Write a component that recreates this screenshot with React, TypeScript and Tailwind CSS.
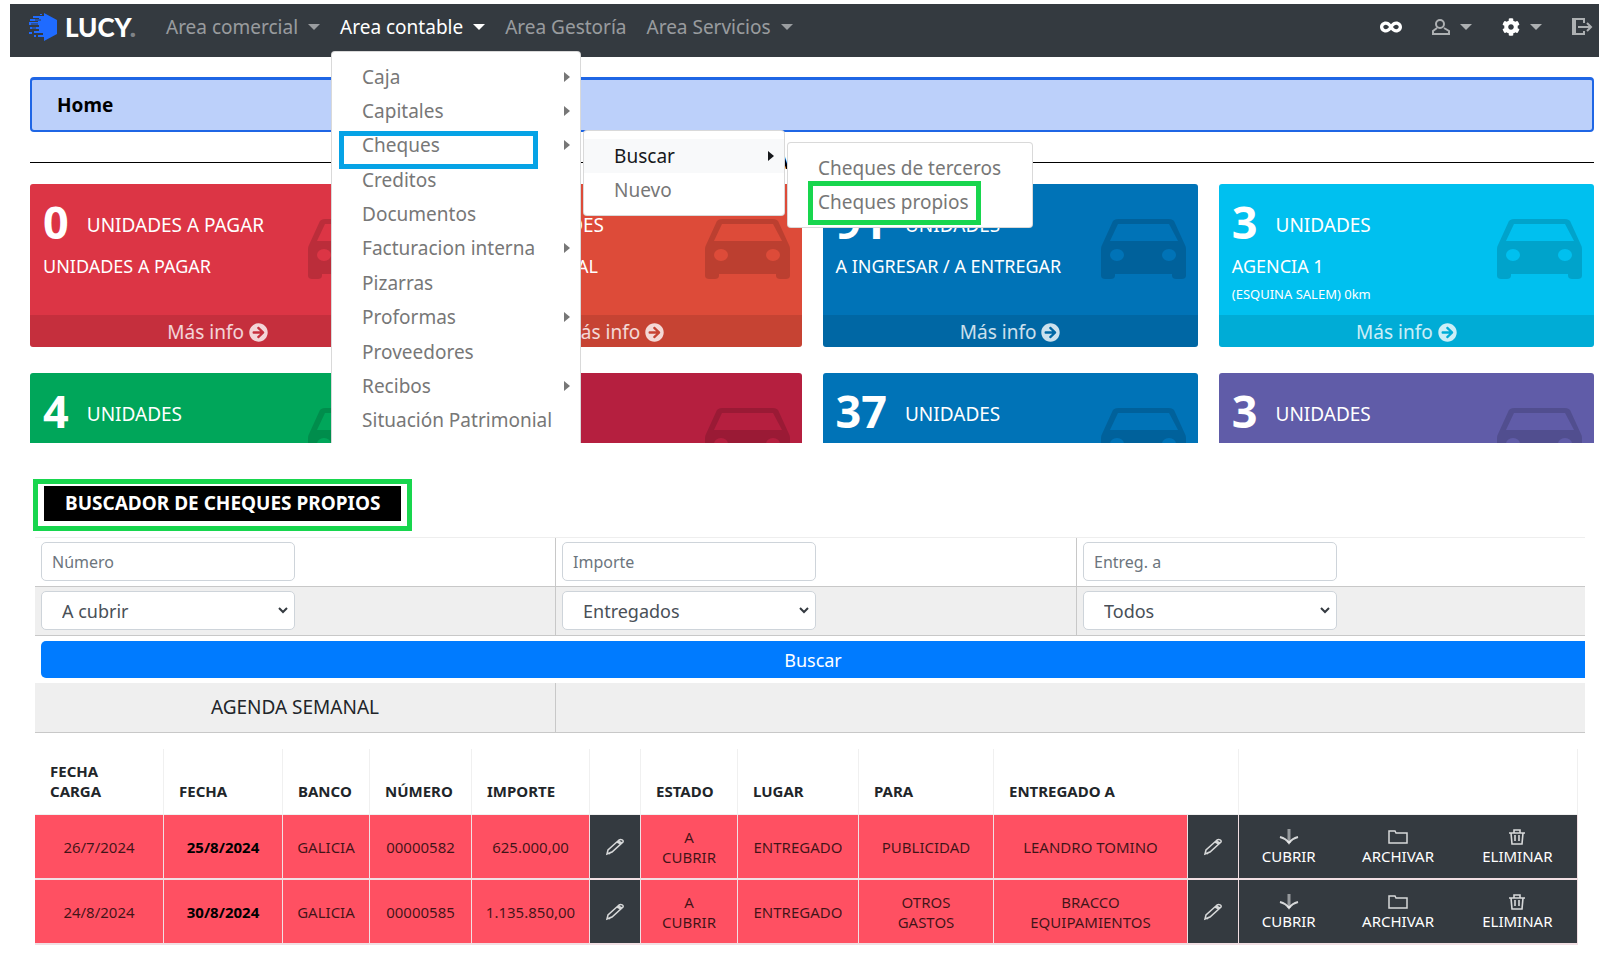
import type { ReactNode } from 'react';
import clsx from 'clsx';
import { FaArrowCircleRight, FaCog, FaInfinity } from 'react-icons/fa';

interface MenuEntry {
  label: string;
  hasChildren?: boolean;
}

const accountingMenu: MenuEntry[] = [
  { label: 'Caja', hasChildren: true },
  { label: 'Capitales', hasChildren: true },
  { label: 'Cheques', hasChildren: true },
  { label: 'Creditos' },
  { label: 'Documentos' },
  { label: 'Facturacion interna', hasChildren: true },
  { label: 'Pizarras' },
  { label: 'Proformas', hasChildren: true },
  { label: 'Proveedores' },
  { label: 'Recibos', hasChildren: true },
  { label: 'Situación Patrimonial' },
];

interface StatCardProps {
  value: string;
  unit: string;
  title?: string;
  note?: string;
  color: string;
}

const cards: StatCardProps[] = [
  { value: '0', unit: 'UNIDADES A PAGAR', title: 'UNIDADES A PAGAR', color: 'bg-[#dc3545]' },
  { value: '40', unit: 'UNIDADES', title: 'AGENCIA CENTRAL', color: 'bg-[#dd4b39]' },
  { value: '91', unit: 'UNIDADES', title: 'A INGRESAR / A ENTREGAR', color: 'bg-[#0073b7]' },
  { value: '3', unit: 'UNIDADES', title: 'AGENCIA 1', note: '(ESQUINA SALEM) 0km', color: 'bg-[#00c0ef]' },
  { value: '4', unit: 'UNIDADES', color: 'bg-[#00a65a]' },
  { value: '2', unit: 'UNIDADES', color: 'bg-[#b51f3f]' },
  { value: '37', unit: 'UNIDADES', color: 'bg-[#0073b7]' },
  { value: '3', unit: 'UNIDADES', color: 'bg-[#605ca8]' },
];

const checks = [
  {
    loaded: '26/7/2024',
    date: '25/8/2024',
    bank: 'GALICIA',
    number: '00000582',
    amount: '625.000,00',
    status: 'A CUBRIR',
    place: 'ENTREGADO',
    purpose: 'PUBLICIDAD',
    recipient: 'LEANDRO TOMINO',
  },
  {
    loaded: '24/8/2024',
    date: '30/8/2024',
    bank: 'GALICIA',
    number: '00000585',
    amount: '1.135.850,00',
    status: 'A CUBRIR',
    place: 'ENTREGADO',
    purpose: 'OTROS GASTOS',
    recipient: 'BRACCO EQUIPAMIENTOS',
  },
];

function CaretDown() {
  return (
    <svg width="12" height="6" viewBox="0 0 12 6" fill="currentColor" aria-hidden="true">
      <path d="M0 0h12L6 6z" />
    </svg>
  );
}

function CaretRight() {
  return (
    <svg width="6" height="10" viewBox="0 0 6 10" fill="currentColor" aria-hidden="true">
      <path d="M0 0l6 5-6 5z" />
    </svg>
  );
}

function LogoMark() {
  return (
    <svg width="28" height="28" viewBox="0 0 28 28" fill="#1f6bff" aria-hidden="true">
      <path d="M15 0l13 7v14l-13 7v-4H9v-2h5v-2H5v-2h5v-2H1v-2h9v-2H0V9h9V8H1V6h9V5H4V3h11z" />
      <path d="M0 19h3v2H0zM5 22h2v2H5zM11 1h2v1h-2z" />
      <path d="M2 11h7M3 15h4M6 7h6" stroke="#343a40" strokeWidth="1" />
    </svg>
  );
}

function UserIcon() {
  return (
    <svg width="18" height="16" viewBox="0 0 18 16" fill="none" stroke="currentColor" strokeWidth="2" aria-hidden="true">
      <ellipse cx="8" cy="5" rx="4" ry="4" />
      <path d="M5 9L1 12v3h16v-3l-5-3" />
    </svg>
  );
}

function ExitIcon() {
  return (
    <svg width="21" height="18" viewBox="0 0 21 18" fill="none" stroke="currentColor" strokeWidth="2" aria-hidden="true">
      <path d="M12 5V1H1v15h11v-3M3 1v15" />
      <path d="M6 9h13M15 5l4 4-4 4" />
    </svg>
  );
}

function CarIcon() {
  return (
    <svg width="85" height="60" viewBox="0 0 85 60" fill="currentColor" fillRule="evenodd" aria-hidden="true">
      <path d="M17 0h51c3 0 5 1 6 4l10 22c1 2 1 3 1 5v26c0 2-2 3-4 3h-6c-2 0-4-1-4-3v-2H14v2c0 2-2 3-4 3H4c-2 0-4-1-4-3V31c0-2 0-3 1-5L11 4c1-3 3-4 6-4zM17 5L9 22h68L68 5zM16 30a7 6 0 1 0 0 12a7 6 0 1 0 0-12zM68 30a7 6 0 1 0 0 12a7 6 0 1 0 0-12z" />
    </svg>
  );
}

function PencilIcon() {
  return (
    <svg width="20" height="18" viewBox="0 0 20 18" fill="none" stroke="currentColor" strokeWidth="1.5" aria-hidden="true">
      <path d="M2 16l1-4L14 2c2-1 5 0 4 2L7 14zM13 3l4 2M12 4l4 2M4 16l2-2" />
    </svg>
  );
}

function ArrowDownIcon() {
  return (
    <svg width="20" height="16" viewBox="0 0 20 16" fill="none" stroke="currentColor" aria-hidden="true">
      <path d="M10 0v14" strokeWidth="3" opacity="0.6" />
      <path d="M1 8c4 1 7 3 9 6 2-3 5-5 9-6" strokeWidth="2" />
    </svg>
  );
}

function FolderIcon() {
  return (
    <svg width="20" height="16" viewBox="0 0 20 16" fill="none" stroke="currentColor" strokeWidth="1.5" aria-hidden="true">
      <path d="M1 14V2h6l1 2h11v10z" />
    </svg>
  );
}

function TrashIcon() {
  return (
    <svg width="18" height="16" viewBox="0 0 18 16" fill="none" stroke="currentColor" strokeWidth="1.6" aria-hidden="true">
      <path d="M1 4h16M6 4V1h6v3M3 4l1 11h10l1-11M7 6v6M11 6v6" />
    </svg>
  );
}

function NavItem({ label, active, caret = true, children }: { label: string; active?: boolean; caret?: boolean; children?: ReactNode }) {
  return (
    <li className="relative">
      <a href="#" className={clsx('flex items-center gap-[10px] px-2', active ? 'text-white' : 'text-white/50')}>
        {label}
        {caret && <CaretDown />}
      </a>
      {children}
    </li>
  );
}

function MenuLink({ label, hasChildren, active }: MenuEntry & { active?: boolean }) {
  return (
    <a
      href="#"
      className={clsx('flex h-full min-h-[34px] items-center justify-between pl-[30px] pr-[10px]', active ? 'bg-[#f8f9fa] text-[#16181b]' : 'text-[#777]')}
    >
      {label}
      {hasChildren && <CaretRight />}
    </a>
  );
}

function AccountingMenu() {
  return (
    <div className="absolute -left-px top-[37px] z-20">
      <ul className="flex h-[396px] w-[250px] flex-col rounded border border-black/15 bg-white py-2">
        {accountingMenu.map((entry) => (
          <li key={entry.label} className="flex-1">
            <MenuLink {...entry} />
          </li>
        ))}
      </ul>
      <span className="absolute left-2 top-20 h-[38px] w-[199px] border-[5px] border-[#06a3e6]" />
      <ul className="absolute left-[252px] top-[79px] w-[202px] rounded border border-black/15 bg-white py-2">
        <li>
          <MenuLink label="Buscar" hasChildren active />
        </li>
        <li>
          <MenuLink label="Nuevo" />
        </li>
      </ul>
      <ul className="absolute left-[456px] top-[91px] w-[246px] rounded border border-black/15 bg-white py-2">
        <li>
          <MenuLink label="Cheques de terceros" />
        </li>
        <li className="relative">
          <MenuLink label="Cheques propios" />
          <span className="absolute -top-1 left-5 h-11 w-[173px] border-[5px] border-[#18d64e]" />
        </li>
      </ul>
    </div>
  );
}

function Navbar() {
  return (
    <nav className="ml-[10px] flex h-[53px] items-center bg-[#343a40] pb-2 pl-[19px] pr-[6px] text-[19px] leading-[26px]">
      <a href="#" className="flex w-[129px] items-center gap-2 font-[Lato] text-[26px] font-black text-white">
        <LogoMark />
        <span>
          LUCY<span className="text-white/40">.</span>
        </span>
      </a>
      <ul className="flex gap-1">
        <NavItem label="Area comercial" />
        <NavItem label="Area contable" active>
          <AccountingMenu />
        </NavItem>
        <NavItem label="Area Gestoría" caret={false} />
        <NavItem label="Area Servicios" />
      </ul>
      <div className="ml-auto flex items-center gap-[30px] text-white/60">
        <button type="button" aria-label="Vincular" className="text-white">
          <FaInfinity size={22} />
        </button>
        <button type="button" aria-label="Usuario" className="flex items-center gap-[10px]">
          <UserIcon />
          <CaretDown />
        </button>
        <button type="button" aria-label="Configuración" className="flex items-center gap-[10px]">
          <FaCog size={18} className="text-white" />
          <CaretDown />
        </button>
        <button type="button" aria-label="Salir">
          <ExitIcon />
        </button>
      </div>
    </nav>
  );
}

function StatCard({ value, unit, title, note, color }: StatCardProps) {
  return (
    <article className={clsx('relative flex h-[163px] flex-col overflow-hidden rounded-[3px] text-white', color)}>
      <div className="flex-1 px-[13px] pt-[15px]">
        <p className="flex items-end gap-[18px]">
          <strong className="text-[45px] leading-[46px]">{value}</strong>
          <span className="text-[19px] leading-10">{unit}</span>
        </p>
        <p className="mt-2 text-[18px] leading-[26px]">{title}</p>
        <p className="text-[13px] leading-[30px]">{note}</p>
      </div>
      <span className="absolute right-3 top-[35px] text-black/15">
        <CarIcon />
      </span>
      <a href="#" className="flex h-8 items-center justify-center gap-[5px] bg-black/10 pt-[2px] text-[19px] text-white/80">
        Más info
        <FaArrowCircleRight size={19} />
      </a>
    </article>
  );
}

const fieldClass = 'h-[39px] w-full rounded-[5px] border border-[#ced4da] bg-white';

function TextField({ id, label }: { id: string; label: string }) {
  return (
    <div className="w-full max-w-[254px]">
      <label htmlFor={id} className="sr-only">{label}</label>
      <input id={id} type="text" placeholder={label} className={clsx(fieldClass, 'px-[10px] text-[16px] placeholder:text-[#6c757d]')} />
    </div>
  );
}

function SelectField({ id, label, value }: { id: string; label: string; value: string }) {
  return (
    <div className="relative w-full max-w-[254px]">
      <label htmlFor={id} className="sr-only">{label}</label>
      <select id={id} className={clsx(fieldClass, 'appearance-none pl-5 pt-[2px] text-[18px] text-[#495057]')}>
        <option>{value}</option>
      </select>
      <svg className="pointer-events-none absolute right-[7px] top-4" width="10" height="7" viewBox="0 0 10 7" fill="none" stroke="#343a40" strokeWidth="2" aria-hidden="true">
        <path d="M1 1l4 4 4-4" />
      </svg>
    </div>
  );
}

function SearchForm() {
  return (
    <form className="mr-[14px] text-[19px] text-[#212529]">
      <div className="grid grid-cols-[521fr_521fr_508fr] divide-x divide-[#c8c8c8] border-b border-t border-b-[#c8c8c8] border-t-[#eee]">
        <div className="px-[6px] pb-[5px] pt-1"><TextField id="numero" label="Número" /></div>
        <div className="px-[6px] pb-[5px] pt-1"><TextField id="importe" label="Importe" /></div>
        <div className="px-[6px] pb-[5px] pt-1"><TextField id="entregado" label="Entreg. a" /></div>
      </div>
      <div className="grid grid-cols-[521fr_521fr_508fr] divide-x divide-[#c8c8c8] border-b border-[#c8c8c8] bg-[#efefef]">
        <div className="px-[6px] pb-[5px] pt-1"><SelectField id="estado" label="Estado" value="A cubrir" /></div>
        <div className="px-[6px] pb-[5px] pt-1"><SelectField id="lugar" label="Lugar" value="Entregados" /></div>
        <div className="px-[6px] pb-[5px] pt-1"><SelectField id="tipo" label="Tipo" value="Todos" /></div>
      </div>
      <div className="py-[5px] pl-[6px]">
        <button type="submit" className="h-[37px] w-full rounded-l-[5px] bg-[#007bff] pt-[2px] text-[18px] text-white">
          Buscar
        </button>
      </div>
      <div className="grid h-[50px] grid-cols-[521fr_1029fr] divide-x divide-[#c8c8c8] border-b border-[#c8c8c8] bg-[#efefef]">
        <div className="flex items-center justify-center">AGENDA SEMANAL</div>
        <div />
      </div>
    </form>
  );
}

function EditCell() {
  return (
    <td className="bg-[#343a40]">
      <button type="button" aria-label="Editar" className="mx-auto block text-white/80">
        <PencilIcon />
      </button>
    </td>
  );
}

function ActionButton({ label, children }: { label: string; children: ReactNode }) {
  return (
    <button type="button" className="flex flex-col items-center gap-[2px] text-white/80">
      {children}
      <span className="leading-[18px] text-white">{label}</span>
    </button>
  );
}

function ChecksTable() {
  return (
    <div className="mr-[21px] mt-4">
      <table className="w-full table-fixed border-separate border-spacing-0 text-center text-[15px] leading-5 text-black/75 [&_td]:border-b-2 [&_td]:border-r [&_td]:border-[#f1dfe3] [&_th]:border-b [&_th]:border-r [&_th]:border-[#f0f0f0] [&_th]:px-[15px] [&_th]:pb-[13px] [&_th]:align-bottom">
        <colgroup>
          <col className="w-[129px]" />
          <col className="w-[119px]" />
          <col className="w-[87px]" />
          <col className="w-[102px]" />
          <col className="w-[118px]" />
          <col className="w-[51px]" />
          <col className="w-[97px]" />
          <col className="w-[121px]" />
          <col className="w-[135px]" />
          <col className="w-[194px]" />
          <col className="w-[51px]" />
          <col />
        </colgroup>
        <thead>
          <tr className="h-[66px] text-left text-[#212529]">
            <th>FECHA CARGA</th>
            <th>FECHA</th>
            <th>BANCO</th>
            <th>NÚMERO</th>
            <th>IMPORTE</th>
            <th />
            <th>ESTADO</th>
            <th>LUGAR</th>
            <th>PARA</th>
            <th colSpan={2}>ENTREGADO A</th>
            <th />
          </tr>
        </thead>
        <tbody>
          {checks.map((check) => (
            <tr key={check.number} className="h-[65px] bg-[#ff5062]">
              <td>{check.loaded}</td>
              <td className="font-bold text-black">{check.date}</td>
              <td>{check.bank}</td>
              <td>{check.number}</td>
              <td>{check.amount}</td>
              <EditCell />
              <td className="px-[18px]">{check.status}</td>
              <td>{check.place}</td>
              <td className="px-5">{check.purpose}</td>
              <td className="px-5">{check.recipient}</td>
              <EditCell />
              <td className="bg-[#343a40]">
                <div className="grid grid-cols-[5fr_6fr_6fr] justify-items-center">
                  <ActionButton label="CUBRIR"><ArrowDownIcon /></ActionButton>
                  <ActionButton label="ARCHIVAR"><FolderIcon /></ActionButton>
                  <ActionButton label="ELIMINAR"><TrashIcon /></ActionButton>
                </div>
              </td>
            </tr>
          ))}
        </tbody>
      </table>
    </div>
  );
}

export default function App() {
  return (
    <div className="bg-white font-['Noto_Sans',sans-serif]">
      <header className="h-[443px] overflow-hidden pt-1">
        <Navbar />
        <div className="ml-[30px] mr-[5px]">
          <h1 className="mt-5 flex h-[55px] items-center rounded border-2 border-t-[3px] border-[#1f66e5] bg-[#bcd0fa] pl-[25px] text-[19px] font-bold text-black">
            Home
          </h1>
          <div className="mb-[10px] mt-[18px] flex h-6 items-center gap-1 text-[18px] font-bold text-black">
            <hr className="flex-1 border-black" />
            Accesos
            <hr className="flex-1 border-black" />
          </div>
          <div className="grid grid-cols-4 gap-x-[21px] gap-y-[26px]">
            {cards.map((card, i) => (
              <StatCard key={i} {...card} />
            ))}
          </div>
        </div>
      </header>
      <main className="pb-3 pl-[35px] pt-9">
        <div className="-ml-[2px] mb-[6px] inline-block border-[5px] border-[#18d64e] px-[6px] pb-[5px] pt-[2px]">
          <h2 className="bg-black px-[21px] text-[19px] font-bold leading-[35px] text-white">BUSCADOR DE CHEQUES PROPIOS</h2>
        </div>
        <SearchForm />
        <ChecksTable />
      </main>
    </div>
  );
}
